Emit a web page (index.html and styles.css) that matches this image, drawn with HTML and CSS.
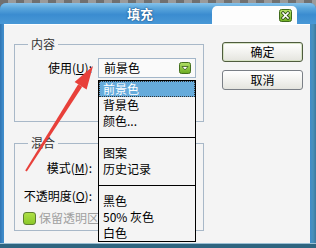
FILE: index.html
```html
<!DOCTYPE html>
<html>
<head>
<meta charset="utf-8">
<link rel="stylesheet" href="styles.css">
</head>
<body>
<div class="win">
  <div class="titlebar">
    <div class="title">填充</div>
    <div class="tab">
      <svg class="close" width="13" height="13" viewBox="0 0 13 13">
        <defs>
          <linearGradient id="g1" x1="0" y1="0" x2="0" y2="1">
            <stop offset="0" stop-color="#b6e26a"/>
            <stop offset="1" stop-color="#6fae22"/>
          </linearGradient>
        </defs>
        <rect x="0.5" y="0.5" width="12" height="12" rx="2" fill="url(#g1)" stroke="#3f6a1c"/>
        <path d="M4 4 L9 9 M9 4 L4 9" stroke="#2f4f16" stroke-width="3.2" stroke-linecap="square"/>
        <path d="M4 4 L9 9 M9 4 L4 9" stroke="#fff" stroke-width="1.6" stroke-linecap="square"/>
      </svg>
    </div>
  </div>
  <div class="client">
    <div class="left">
      <fieldset class="group g1">
        <legend>内容</legend>
        <div class="row">
          <label>使用(<u>U</u>):</label>
          <div class="select">
            <span>前景色</span>
            <svg class="dd" width="12" height="12" viewBox="0 0 12 12">
              <defs>
                <linearGradient id="g2" x1="0" y1="0" x2="0" y2="1">
                  <stop offset="0" stop-color="#b2e066"/>
                  <stop offset="1" stop-color="#6aaa20"/>
                </linearGradient>
              </defs>
              <rect x="0.5" y="0.5" width="11" height="11" rx="2" fill="url(#g2)" stroke="#44701e"/>
              <path d="M3 4.5 L9 4.5 L6 8 Z" fill="#fff" stroke="#3a5a1a" stroke-width="0.8" stroke-linejoin="round"/>
            </svg>
          </div>
        </div>
      </fieldset>
      <fieldset class="group g2">
        <legend>混合</legend>
        <div class="row">
          <label>模式(<u>M</u>):</label>
          <div class="select"></div>
        </div>
        <div class="row">
          <label>不透明度(<u>O</u>):</label>
          <div class="field"></div>
        </div>
        <div class="check"><span class="box"></span><span class="check-text">保留透明区域</span></div>
      </fieldset>
    </div>
    <div class="buttons">
      <div class="btn default">确定</div>
      <div class="btn">取消</div>
    </div>
    <ul class="list">
      <li class="sel">前景色</li>
      <li>背景色</li>
      <li>颜色...</li>
      <li class="sep"></li>
      <li>图案</li>
      <li>历史记录</li>
      <li class="sep"></li>
      <li>黑色</li>
      <li>50% 灰色</li>
      <li>白色</li>
    </ul>
  </div>
  <div class="frame-bottom"></div>
</div>
<svg class="arrow" width="316" height="248" viewBox="0 0 316 248">
  <polygon points="25.2,170.5 26.8,171.5 82.2,86.8 78.2,84.3" fill="#e8403a"/>
  <polygon points="93,66 86.6,89.6 74.6,82.0" fill="#e8403a"/>
</svg>
</body>
</html>
```
FILE: styles.css
```css
* { box-sizing: border-box; }
body {
  margin: 0;
  width: 316px;
  height: 248px;
  overflow: hidden;
  background: repeating-linear-gradient(90deg, #707070 0 8px, #9a9a9a 8px 16px);
  font: 12px/16px "Noto Sans CJK SC", sans-serif;
  color: #000;
}
.win {
  margin-top: 3px;
  height: 245px;
  border-radius: 6px 6px 0 0;
  background: linear-gradient(90deg, #2f74b2 0, #3f8cca 3px, #3f8cca 310px, #4a90ba 313px, #3a789e 316px);
  display: flex;
  flex-direction: column;
  overflow: hidden;
}
.titlebar {
  height: 21px;
  flex: none;
  display: flex;
  align-items: flex-end;
  background: linear-gradient(#86c2ea 0, #5aa6dc 25%, #3b8cd0 55%, #4898d6 100%);
}
.title {
  flex: 1;
  align-self: center;
  padding-left: 127px;
  color: #fff;
  font-weight: bold;
  font-size: 13px;
  line-height: 16px;
  text-shadow: 0 0 2px #1d4f80, 0 0 1px #1d4f80;
}
.tab {
  width: 85px;
  height: 18px;
  margin-right: 19px;
  background: #fdfdfd;
  border-radius: 5px 5px 0 0;
  padding: 3px 0 0 67px;
}
.close { display: block; }
.client {
  flex: 1;
  margin: 0 6px 0 4px;
  background: #f4f4f4;
  position: relative;
  display: flex;
  align-items: flex-start;
  padding: 13px 0 0 10px;
  border-top: 1px solid #fff;
}
.frame-bottom {
  height: 5px;
  flex: none;
  background: #2f6580;
  border-top: 1px solid #9cc0d4;
}
.left {
  display: flex;
  flex-direction: column;
  gap: 14px;
  width: 190px;
  margin-top: -1px;
}
.group {
  margin: 0;
  min-width: 0;
  width: 190px;
  border: 1px solid #a8b8c8;
}
.g1 { padding: 7px 7px 43px 0; }
.g2 { padding: 8px 7px 5px 0; }
legend {
  margin-left: 13px;
  padding: 0 3px;
  line-height: 14px;
  color: #333;
}
.row {
  display: flex;
  align-items: center;
  height: 20px;
}
.g2 .row + .row { margin-top: 8px; }
.row label {
  width: 77px;
  margin-right: 6px;
  text-align: right;
  white-space: nowrap;
}
.select, .field {
  width: 98px;
  height: 20px;
  border: 1px solid #a3b6c9;
  background: #fafafa;
  display: flex;
  align-items: center;
  justify-content: space-between;
  padding: 0 4px 0 5px;
}
.field { width: 60px; }
.dd { display: block; }
.check {
  display: flex;
  align-items: center;
  width: 75px;
  height: 14px;
  margin: 5px 0 0 8px;
  color: #a0a0a0;
  white-space: nowrap;
  overflow: hidden;
}
.box {
  flex: none;
  width: 13px;
  height: 13px;
  margin-right: 3px;
  border: 1px solid #5f7f30;
  border-radius: 3px;
  background: linear-gradient(#aee046, #8cc82a);
}
.check-text {
  flex: none;
}
.buttons {
  margin: 4px 0 0 18px;
  display: flex;
  flex-direction: column;
  gap: 8px;
}
.btn {
  width: 81px;
  height: 20px;
  border: 1px solid #7a7f86;
  border-radius: 3px;
  background: linear-gradient(#ffffff, #f0f0ec 60%, #e4e4de);
  text-align: center;
  line-height: 18px;
}
.btn.default {
  border-color: #4f5c3e;
  box-shadow: inset 0 0 0 1px #d6e2c4;
}
.list {
  position: absolute;
  left: 94px;
  top: 55px;
  width: 98px;
  margin: 0;
  padding: 0;
  list-style: none;
  border: 1px solid #000;
  background: #f4f4f4;
}
.list li {
  height: 16px;
  line-height: 16px;
  padding-left: 4px;
  white-space: nowrap;
}
.list li.sel {
  background: #66abdb;
  color: #fff;
  outline: 1px dotted #333;
  outline-offset: -1px;
}
.list li.sep {
  padding: 0;
  background: linear-gradient(transparent 8px, #000 8px, #000 9px, transparent 9px);
}
.arrow {
  position: absolute;
  left: 0;
  top: 0;
  pointer-events: none;
}
```
